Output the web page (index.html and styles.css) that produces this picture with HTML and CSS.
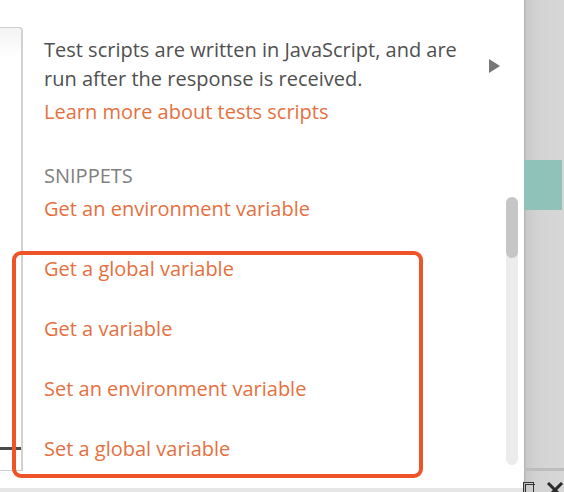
FILE: index.html
```html
<!DOCTYPE html>
<html>
<head>
<meta charset="utf-8">
<link rel="stylesheet" href="styles.css">
</head>
<body>
<div class="screen">
  <div class="stub-col">
    <div class="stub">
      <div class="stub-rule"></div>
    </div>
    <div class="bottom-band"></div>
  </div>
  <div class="panel-col">
    <div class="panel">
      <div class="intro">
        <p class="desc">Test scripts are written in JavaScript, and are run after the response is received.</p>
        <span class="caret"></span>
      </div>
      <a class="link learn">Learn more about tests scripts</a>
      <div class="heading">SNIPPETS</div>
      <ul class="snippets">
        <li class="link">Get an environment variable</li>
        <li class="link">Get a global variable</li>
        <li class="link">Get a variable</li>
        <li class="link">Set an environment variable</li>
        <li class="link">Set a global variable</li>
      </ul>
      <div class="scrollbar"><div class="thumb"></div></div>
      <div class="highlight"></div>
    </div>
    <div class="bottom-band"></div>
  </div>
  <div class="side">
    <div class="side-top"></div>
    <div class="teal"></div>
    <div class="side-mid"></div>
    <div class="side-rule"></div>
    <div class="side-icons">
      <svg class="icon-win" width="12" height="10" viewBox="0 0 12 10"><rect x="0.5" y="0.5" width="10" height="12" fill="none" stroke="#333" stroke-width="1"/><rect x="2.5" y="2.5" width="10" height="12" fill="none" stroke="#333" stroke-width="1"/></svg>
      <svg class="icon-x" width="18" height="10" viewBox="0 0 18 10"><path d="M2 1 L16 15 M16 1 L2 15" stroke="#2b2b2b" stroke-width="3" fill="none"/></svg>
    </div>
  </div>
</div>
</body>
</html>
```

FILE: styles.css
```css
* { box-sizing: border-box; }
html, body { margin: 0; padding: 0; }
body {
  width: 564px;
  height: 492px;
  overflow: hidden;
  background: #fff;
  font-family: "Open Sans", "Noto Sans", sans-serif;
}
.screen {
  display: flex;
  height: 492px;
}
.stub-col {
  width: 23px;
  display: flex;
  flex-direction: column;
}
.stub {
  margin-top: 27px;
  height: 444px;
  border: 1px solid #cfcfcf;
  border-left: none;
  border-right: 2px solid #d2d2d2;
  border-top-right-radius: 4px;
  background: linear-gradient(to bottom, #f3f3f3 0, #fff 30px);
  position: relative;
  display: flex;
  flex-direction: column;
}
.stub-rule {
  margin-top: 419px;
  height: 3px;
  background: #4a4a4a;
}
.bottom-band {
  margin-top: auto;
  height: 4px;
  background: #e6e6e6;
}
.panel-col {
  width: 501px;
  display: flex;
  flex-direction: column;
}
.panel {
  flex: 1;
  position: relative;
  padding: 35px 0 0 21px;
}
.intro {
  display: flex;
  align-items: center;
}
.desc {
  margin: 0;
  width: 440px;
  font-size: 20px;
  line-height: 29px;
  color: #505050;
}
.caret {
  margin-left: 5px;
  margin-top: 3px;
  width: 0;
  height: 0;
  border-top: 7.5px solid transparent;
  border-bottom: 7.5px solid transparent;
  border-left: 11px solid #777;
}
.link {
  display: block;
  font-size: 20px;
  line-height: 29px;
  color: #e5703f;
}
.learn {
  margin-top: 4px;
}
.heading {
  margin-top: 35px;
  font-size: 20px;
  line-height: 29px;
  color: #808080;
}
.snippets {
  list-style: none;
  margin: 4px 0 0;
  padding: 0;
  display: flex;
  flex-direction: column;
  gap: 31px;
}
.scrollbar {
  position: absolute;
  left: 483px;
  top: 197px;
  width: 12px;
  height: 268px;
  border-radius: 6px;
  background: #ececec;
}
.thumb {
  height: 61px;
  border-radius: 6px;
  background: #c6c6c6;
}
.highlight {
  position: absolute;
  left: -11px;
  top: 251px;
  width: 411px;
  height: 227px;
  border: 4.5px solid #ee5428;
  border-radius: 9px;
}
.side {
  width: 40px;
  display: flex;
  flex-direction: column;
  background: linear-gradient(to right, #aeaeae 0, #c9c9c9 2px, #d3d3d3 14px, #d7d7d7 100%);
}
.side-top { height: 160px; }
.teal {
  height: 50px;
  margin-right: 2px;
  background: #8fc2b9;
}
.side-mid { height: 259px; }
.side-rule {
  height: 3px;
  background: #bdbdbd;
}
.side-icons {
  margin-top: 11px;
  display: flex;
  align-items: flex-start;
  justify-content: space-between;
  gap: 11px;
}
.icon-win { display: block; margin-left: -1px; }
.icon-x { display: block; }
```
